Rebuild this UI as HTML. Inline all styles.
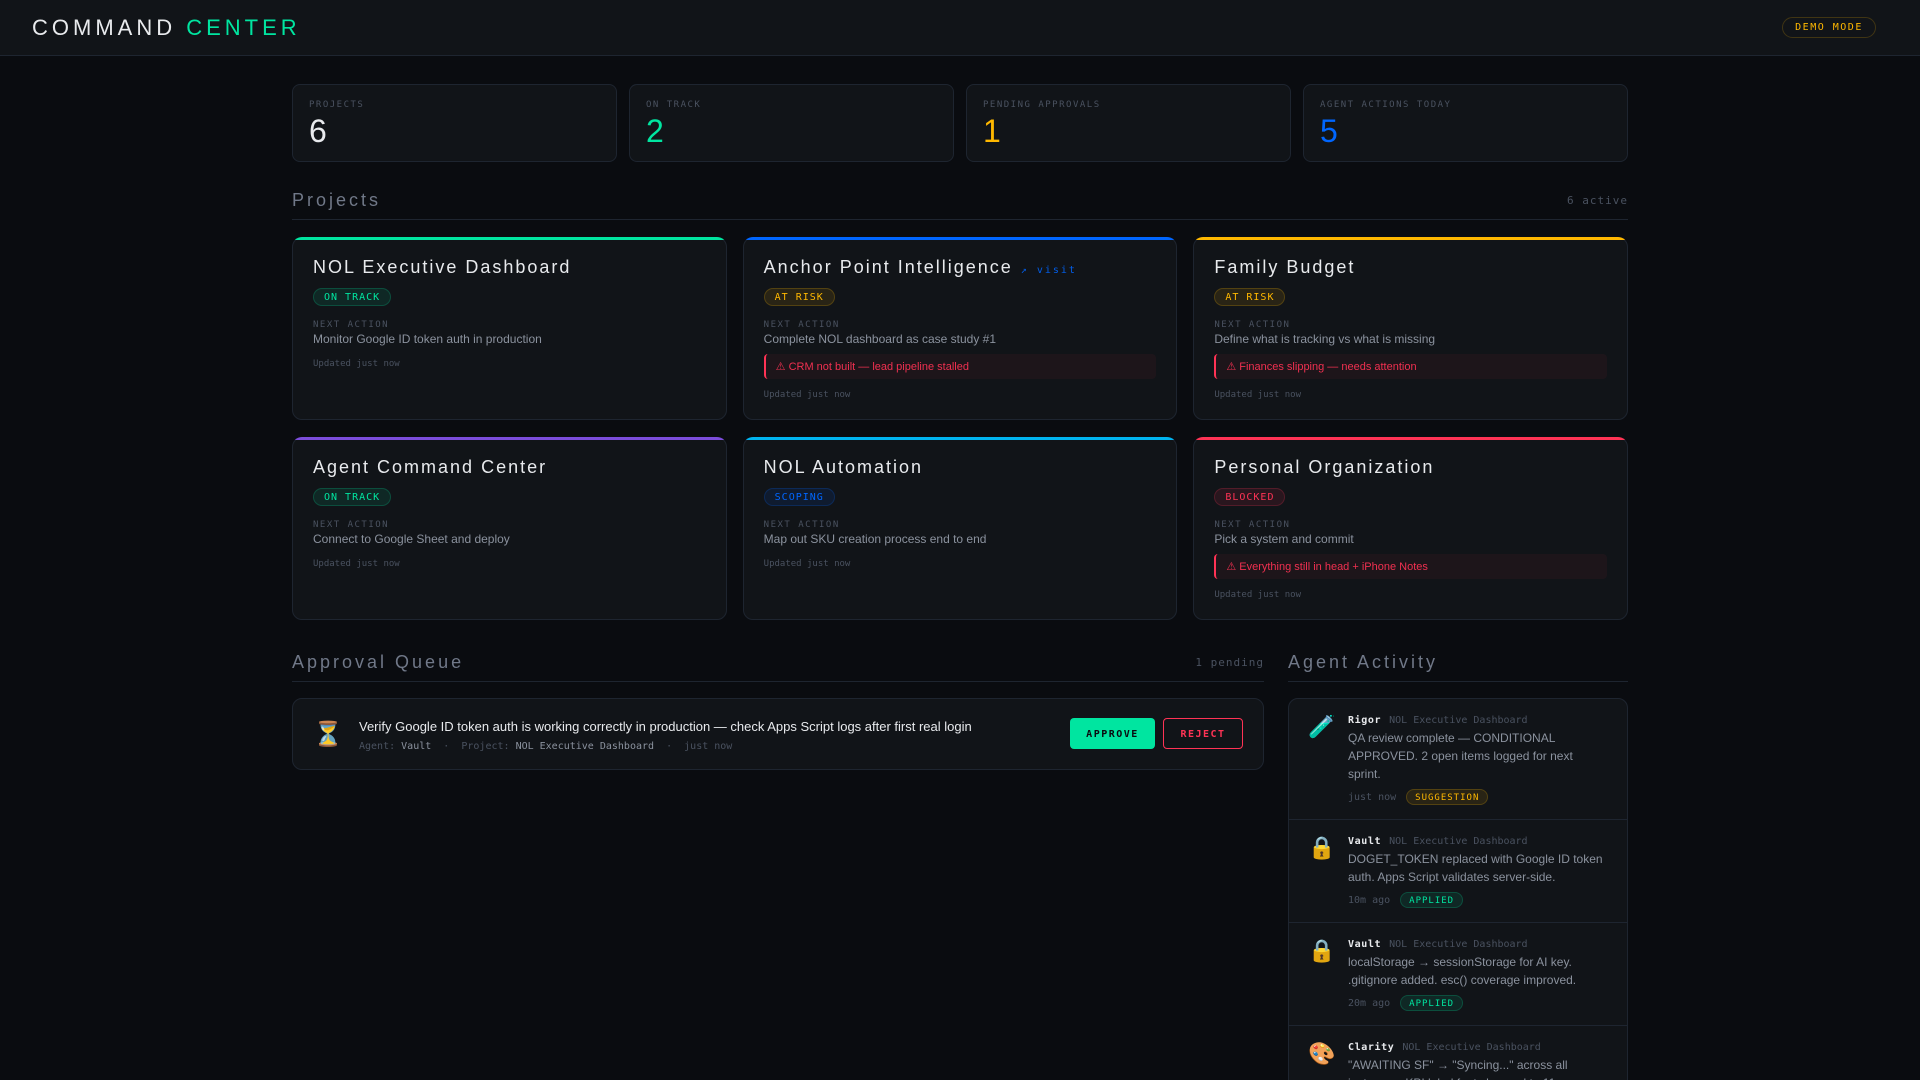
<!DOCTYPE html>
<html lang="en"><head><meta charset="utf-8"><title>Command Center</title>
<style>
*{box-sizing:border-box;margin:0;padding:0}
html,body{width:1920px;height:1080px;overflow:hidden;background:#0a0c10}
body{font-family:"Liberation Sans",sans-serif;color:#e8eaed;position:relative}
header{position:absolute;left:0;top:0;width:1920px;height:56px;background:#111418;border-bottom:1px solid #1e2530}
.logo{position:absolute;left:32px;top:14px;font-size:22px;line-height:27px;letter-spacing:4px;color:#e8eaed;white-space:nowrap}
.logo span{color:#00e5a0}
.demo{position:absolute;left:1782px;top:17px;width:94px;height:21px;border:1px solid rgba(255,184,0,.2);border-radius:20px;font:10px/19px "DejaVu Sans Mono",monospace;letter-spacing:1.5px;color:#ffb800;text-align:center;white-space:nowrap}
.stat{position:absolute;top:84px;width:325px;height:78px;background:#111418;border:1px solid #1e2530;border-radius:8px}
.stat .l{position:absolute;left:16px;top:14px;font:9px/12px "DejaVu Sans Mono",monospace;letter-spacing:1.5px;color:#4a5260;white-space:nowrap}
.stat .v{position:absolute;left:16px;top:28px;font-size:32px;line-height:37px}
.sec{position:absolute;font-size:18px;line-height:22px;letter-spacing:3px;color:#707888;white-space:nowrap}
.cnt{position:absolute;font:11px/14px "DejaVu Sans Mono",monospace;letter-spacing:1px;color:#4a5260;white-space:nowrap;text-align:right}
.rule{position:absolute;height:1px;background:#1e2530}
.card{position:absolute;width:434.67px;height:183px;background:#111418;border:1px solid #1e2530;border-radius:10px;padding:18px 20px 0}
.card::before{content:"";position:absolute;left:-1px;right:-1px;top:-1px;height:12px;border-radius:10px 10px 0 0;background:var(--c);clip-path:inset(0 0 9px 0)}
.t{font-size:18px;line-height:22px;letter-spacing:2px;color:#e8eaed;white-space:nowrap}
.t a{font:10px/12px "DejaVu Sans Mono",monospace;letter-spacing:2px;color:#0066ff;margin-left:1px;text-decoration:none;opacity:.9}
.b{display:block;width:max-content;margin-top:10px;height:18px;padding:0 10px;border:1px solid;border-radius:20px;font:10px/18px "DejaVu Sans Mono",monospace;letter-spacing:1px;white-space:nowrap}
.g{color:#00e5a0;background:rgba(0,229,160,.1);border-color:rgba(0,229,160,.2)}
.y{color:#ffb800;background:rgba(255,184,0,.1);border-color:rgba(255,184,0,.2)}
.bl{color:#0066ff;background:rgba(0,102,255,.1);border-color:rgba(0,102,255,.2)}
.r{color:#ff3355;background:rgba(255,51,85,.1);border-color:rgba(255,51,85,.2)}
.na{margin-top:13px;font:9px/12px "DejaVu Sans Mono",monospace;letter-spacing:1.5px;color:#4a5260;white-space:nowrap}
.nt{margin-top:0;font-size:12px;line-height:16px;color:#8b929e;white-space:nowrap}
.al{margin-top:7px;height:25px;border-left:2px solid #ff3355;border-radius:4px;background:rgba(255,51,85,.05);padding-left:10px;font-size:11px;line-height:26px;color:#f03050;white-space:nowrap}
.up{margin-top:11px;font:9px/12px "DejaVu Sans Mono",monospace;color:#4a5260;white-space:nowrap}
.al+.up{margin-top:10px}
.apv{position:absolute;left:292px;top:698px;width:972px;height:72px;background:#111418;border:1px solid #1e2530;border-radius:10px}
.apv .e{position:absolute;left:20px;top:19px;width:30px;font-size:24px;line-height:34px;text-align:center}
.apv .x{position:absolute;left:66px;top:20px;font-size:13px;line-height:16px;color:#e8eaed;white-space:nowrap}
.apv .m{position:absolute;left:66px;top:41px;font:10px/13px "DejaVu Sans Mono",monospace;color:#4a5260;white-space:pre}
.apv .m b{font-weight:400;color:#8b929e}
.btn{position:absolute;top:19px;height:31px;border-radius:4px;font:bold 10px/33px "DejaVu Sans Mono",monospace;letter-spacing:1.5px;text-align:center}
.act{position:absolute;left:1288px;top:698px;width:340px;height:600px;background:#111418;border:1px solid #1e2530;border-radius:10px;overflow:hidden}
.it{position:relative;padding:14px 20px 14px 59px;border-bottom:1px solid #1e2530}
.it .e{position:absolute;left:19px;top:15px;font-size:22px;line-height:26px;width:26px;text-align:center}
.hd{height:12px;font:10px/16px "DejaVu Sans Mono",monospace;color:#4a5260;white-space:nowrap}
.hd b{letter-spacing:.6px;color:#e8eaed;margin-right:8px}
.bd{margin-top:4px;font-size:12px;line-height:18px;color:#8b929e}
.ft{margin-top:6px;height:16px;font:10px/18px "DejaVu Sans Mono",monospace;color:#4a5260;white-space:nowrap}
.ft span{display:inline-block;height:16px;margin-left:10px;padding:0 8px;border-width:1px;border-style:solid;border-radius:20px;font-size:9px;line-height:16px;letter-spacing:1px;vertical-align:top}
</style></head><body>
<header><div class="logo">COMMAND <span>CENTER</span></div><div class="demo">DEMO MODE</div></header>

<div class="stat" style="left:292px"><div class="l">PROJECTS</div><div class="v" style="color:#e8eaed">6</div></div>
<div class="stat" style="left:629px"><div class="l">ON TRACK</div><div class="v" style="color:#00e5a0">2</div></div>
<div class="stat" style="left:966px"><div class="l">PENDING APPROVALS</div><div class="v" style="color:#ffb800">1</div></div>
<div class="stat" style="left:1303px"><div class="l">AGENT ACTIONS TODAY</div><div class="v" style="color:#0066ff">5</div></div>

<div class="sec" style="left:292px;top:189px">Projects</div>
<div class="cnt" style="right:292px;top:194px">6 active</div>
<div class="rule" style="left:292px;top:219px;width:1336px"></div>

<div class="card" style="left:292px;top:237px;--c:#00e5a0"><div class="t">NOL Executive Dashboard</div><span class="b g">ON TRACK</span><div class="na">NEXT ACTION</div><div class="nt">Monitor Google ID token auth in production</div><div class="up">Updated just now</div></div>
<div class="card" style="left:742.67px;top:237px;--c:#0066ff"><div class="t">Anchor Point Intelligence <a>↗ visit</a></div><span class="b y">AT RISK</span><div class="na">NEXT ACTION</div><div class="nt">Complete NOL dashboard as case study #1</div><div class="al">⚠ CRM not built — lead pipeline stalled</div><div class="up">Updated just now</div></div>
<div class="card" style="left:1193.33px;top:237px;--c:#ffb800"><div class="t">Family Budget</div><span class="b y">AT RISK</span><div class="na">NEXT ACTION</div><div class="nt">Define what is tracking vs what is missing</div><div class="al">⚠ Finances slipping — needs attention</div><div class="up">Updated just now</div></div>
<div class="card" style="left:292px;top:437px;--c:#7c4ddb"><div class="t">Agent Command Center</div><span class="b g">ON TRACK</span><div class="na">NEXT ACTION</div><div class="nt">Connect to Google Sheet and deploy</div><div class="up">Updated just now</div></div>
<div class="card" style="left:742.67px;top:437px;--c:#00b4f0"><div class="t">NOL Automation</div><span class="b bl">SCOPING</span><div class="na">NEXT ACTION</div><div class="nt">Map out SKU creation process end to end</div><div class="up">Updated just now</div></div>
<div class="card" style="left:1193.33px;top:437px;--c:#ff3355"><div class="t">Personal Organization</div><span class="b r">BLOCKED</span><div class="na">NEXT ACTION</div><div class="nt">Pick a system and commit</div><div class="al">⚠ Everything still in head + iPhone Notes</div><div class="up">Updated just now</div></div>

<div class="sec" style="left:292px;top:651px">Approval Queue</div>
<div class="cnt" style="left:1100px;width:164px;top:656px">1 pending</div>
<div class="rule" style="left:292px;top:681px;width:972px"></div>
<div class="apv">
<div class="e">⏳</div>
<div class="x">Verify Google ID token auth is working correctly in production — check Apps Script logs after first real login</div>
<div class="m">Agent: <b>Vault</b>  ·  Project: <b>NOL Executive Dashboard</b>  ·  just now</div>
<div class="btn" style="left:777px;width:85px;background:#00e5a0;color:#0a0c10">APPROVE</div>
<div class="btn" style="left:870px;width:80px;border:1px solid #ff3355;color:#ff3355;line-height:31px">REJECT</div>
</div>

<div class="sec" style="left:1288px;top:651px">Agent Activity</div>
<div class="rule" style="left:1288px;top:681px;width:340px"></div>
<div class="act">
<div class="it"><div class="e">🧪</div><div class="hd"><b>Rigor</b>NOL Executive Dashboard</div><div class="bd">QA review complete — CONDITIONAL APPROVED. 2 open items logged for next sprint.</div><div class="ft">just now<span class="y">SUGGESTION</span></div></div>
<div class="it"><div class="e">🔒</div><div class="hd"><b>Vault</b>NOL Executive Dashboard</div><div class="bd">DOGET_TOKEN replaced with Google ID token auth. Apps Script validates server-side.</div><div class="ft">10m ago<span class="g">APPLIED</span></div></div>
<div class="it"><div class="e">🔒</div><div class="hd"><b>Vault</b>NOL Executive Dashboard</div><div class="bd">localStorage → sessionStorage for AI key. .gitignore added. esc() coverage improved.</div><div class="ft">20m ago<span class="g">APPLIED</span></div></div>
<div class="it"><div class="e">🎨</div><div class="hd"><b>Clarity</b>NOL Executive Dashboard</div><div class="bd">"AWAITING SF" → "Syncing..." across all instances. KPI label font changed to 11px.</div><div class="ft">30m ago<span class="g">APPLIED</span></div></div>
</div>
</body></html>
